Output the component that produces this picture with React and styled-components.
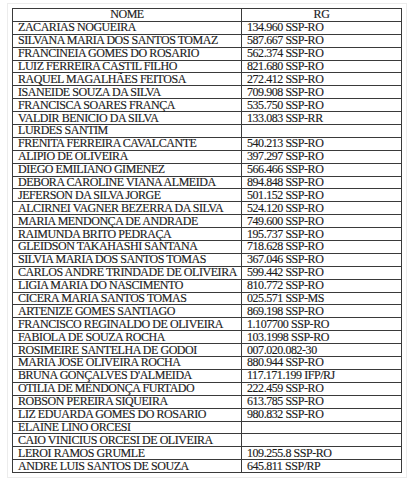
import React from "react";
import styled, { createGlobalStyle } from "styled-components";

const Global = createGlobalStyle`
  html, body { margin: 0; padding: 0; background: #ffffff; }
  body { font-family: "Liberation Serif", "Times New Roman", serif; }
`;

const Page = styled.div`
  width: 418px;
  height: 480px;
  padding: 8px 0 0 12px;
  box-sizing: border-box;
  background: #fff;
`;

const Table = styled.table`
  width: 390px;
  height: 465px;
  border-collapse: collapse;
  table-layout: fixed;
  font-family: "Liberation Serif", "Times New Roman", serif;
  font-size: 12px;
  letter-spacing: -0.45px;
  color: #1c1c1c;
  -webkit-text-stroke: 0.15px #1c1c1c;
  border: 1px solid #3a3a3a;
  box-shadow: 0 0 0 4px #fff, 0 0 0 5px #ececec;
`;

const Row = styled.tr`
  height: 12.9px;
`;

const Cell = styled.td`
  border: 1px solid #3a3a3a;
  padding: 0 0 0 5px;
  line-height: 11px;
  white-space: nowrap;
  vertical-align: middle;
  text-align: left;
`;

const HeadCell = styled.th`
  border: 1px solid #3a3a3a;
  padding: 0;
  line-height: 11px;
  font-weight: normal;
  text-align: center;
  vertical-align: middle;
`;

const data = [
  ["ZACARIAS NOGUEIRA", "134.960 SSP-RO"],
  ["SILVANA MARIA DOS SANTOS TOMAZ", "587.667 SSP-RO"],
  ["FRANCINEIA GOMES DO ROSARIO", "562.374 SSP-RO"],
  ["LUIZ FERREIRA CASTIL FILHO", "821.680 SSP-RO"],
  ["RAQUEL MAGALHÃES FEITOSA", "272.412 SSP-RO"],
  ["ISANEIDE SOUZA DA SILVA", "709.908 SSP-RO"],
  ["FRANCISCA SOARES FRANÇA", "535.750 SSP-RO"],
  ["VALDIR BENICIO DA SILVA", "133.083 SSP-RR"],
  ["LURDES SANTIM", ""],
  ["FRENITA FERREIRA CAVALCANTE", "540.213 SSP-RO"],
  ["ALIPIO DE OLIVEIRA", "397.297 SSP-RO"],
  ["DIEGO EMILIANO GIMENEZ", "566.466 SSP-RO"],
  ["DEBORA CAROLINE VIANA ALMEIDA", "894.848 SSP-RO"],
  ["JEFERSON DA SILVA JORGE", "501.152 SSP-RO"],
  ["ALCIRNEI VAGNER BEZERRA DA SILVA", "524.120 SSP-RO"],
  ["MARIA MENDONÇA DE ANDRADE", "749.600 SSP-RO"],
  ["RAIMUNDA BRITO PEDRAÇA", "195.737 SSP-RO"],
  ["GLEIDSON TAKAHASHI SANTANA", "718.628 SSP-RO"],
  ["SILVIA MARIA DOS SANTOS TOMAS", "367.046 SSP-RO"],
  ["CARLOS ANDRE TRINDADE DE OLIVEIRA", "599.442 SSP-RO"],
  ["LIGIA MARIA DO NASCIMENTO", "810.772 SSP-RO"],
  ["CICERA MARIA SANTOS TOMAS", "025.571 SSP-MS"],
  ["ARTENIZE GOMES SANTIAGO", "869.198 SSP-RO"],
  ["FRANCISCO REGINALDO DE OLIVEIRA", "1.107700 SSP-RO"],
  ["FABIOLA DE SOUZA ROCHA", "103.1998 SSP-RO"],
  ["ROSIMEIRE SANTELHA DE GODOI", "007.020.082-30"],
  ["MARIA JOSE OLIVEIRA ROCHA", "880.944 SSP-RO"],
  ["BRUNA GONÇALVES D'ALMEIDA", "117.171.199 IFP/RJ"],
  ["OTILIA DE MENDONÇA FURTADO", "222.459 SSP-RO"],
  ["ROBSON PEREIRA SIQUEIRA", "613.785 SSP-RO"],
  ["LIZ EDUARDA GOMES DO ROSARIO", "980.832 SSP-RO"],
  ["ELAINE LINO ORCESI", ""],
  ["CAIO VINICIUS ORCESI DE OLIVEIRA", ""],
  ["LEROI RAMOS GRUMLE", "109.255.8 SSP-RO"],
  ["ANDRE LUIS SANTOS DE SOUZA", "645.811 SSP/RP"],
];

export default function App() {
  return (
    <>
      <Global />
      <Page>
        <Table>
          <colgroup>
            <col style={{ width: "229px" }} />
            <col />
          </colgroup>
          <thead>
            <Row>
              <HeadCell>NOME</HeadCell>
              <HeadCell>RG</HeadCell>
            </Row>
          </thead>
          <tbody>
            {data.map(([n, rg], i) => (
              <Row key={i}>
                <Cell>{n}</Cell>
                <Cell>{rg}</Cell>
              </Row>
            ))}
          </tbody>
        </Table>
      </Page>
    </>
  );
}
